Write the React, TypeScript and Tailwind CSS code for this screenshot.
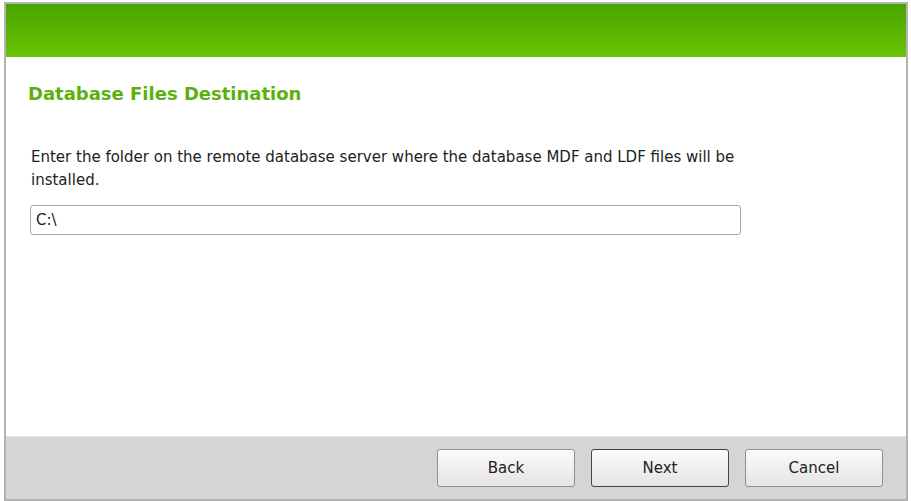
import React from "react";

// Setup wizard step: database files destination
const App = () => {
  return (
    <div className="w-[911px] h-[501px] bg-white pt-[2px] pl-[4px]">
      <div className="w-[904px] h-[499px] border-2 border-[#b3b3b3] flex flex-col bg-white">
        <div className="h-[53px] bg-gradient-to-b from-[#48a400] to-[#6bc400]" />

        <div className="flex-1 pl-[22px] pt-[25px]">
          <h1 className="text-[18px] font-bold text-[#5cb00e] leading-[24px] font-['DejaVu_Sans',sans-serif]">
            Database Files Destination
          </h1>
          <div className="pl-[2px] font-['DejaVu_Sans',sans-serif]">
            <p className="mt-[40px] pl-[1px] text-[15px] leading-[23px] text-[#222]">
              Enter the folder on the remote database server where the database MDF and LDF files will be
              <br />
              installed.
            </p>
            <input
              className="mt-[13px] w-[711px] h-[30px] border border-[#a9a9a9] rounded-[3px] px-[5px] text-[15px] text-[#222] outline-none"
              defaultValue="C:\"
            />
          </div>
        </div>

        <div className="h-[63px] bg-[#d5d4d6] border-t border-[#e6e6e6] flex justify-end items-start pt-[12px] pr-[23px] gap-[16px] font-['DejaVu_Sans',sans-serif]">
          <button className="w-[138px] h-[38px] rounded-[3px] border border-[#8f8f8f] bg-gradient-to-b from-[#fbfbfb] to-[#e4e4e4] text-[15px] text-[#222]">
            Back
          </button>
          <button className="w-[138px] h-[38px] rounded-[3px] border border-[#444] bg-gradient-to-b from-[#fbfbfb] to-[#e4e4e4] text-[15px] text-[#222]">
            Next
          </button>
          <button className="w-[138px] h-[38px] rounded-[3px] border border-[#8f8f8f] bg-gradient-to-b from-[#fbfbfb] to-[#e4e4e4] text-[15px] text-[#222]">
            Cancel
          </button>
        </div>
      </div>
    </div>
  );
};

export default App;
